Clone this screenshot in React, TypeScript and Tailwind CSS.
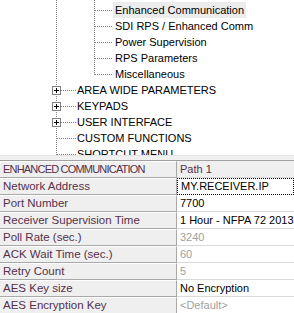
const DOT = "#808080";

type Child = { label: string; selected?: boolean; last?: boolean };
type Top = { label: string; expandable?: boolean };

const children: Child[] = [
  { label: "Enhanced Communication", selected: true },
  { label: "SDI RPS / Enhanced Comm" },
  { label: "Power Supervision" },
  { label: "RPS Parameters" },
  { label: "Miscellaneous", last: true },
];

const tops: Top[] = [
  { label: "AREA WIDE PARAMETERS", expandable: true },
  { label: "KEYPADS", expandable: true },
  { label: "USER INTERFACE", expandable: true },
  { label: "CUSTOM FUNCTIONS" },
  { label: "SHORTCUT MENU" },
];

type Row = { label: string; value: string; tone?: "dim" | "focus" | "head" };

const rows: Row[] = [
  { label: "ENHANCED COMMUNICATION", value: "Path 1", tone: "head" },
  { label: "Network Address", value: "MY.RECEIVER.IP", tone: "focus" },
  { label: "Port Number", value: "7700" },
  { label: "Receiver Supervision Time", value: "1 Hour - NFPA 72 2013" },
  { label: "Poll Rate (sec.)", value: "3240", tone: "dim" },
  { label: "ACK Wait Time (sec.)", value: "60", tone: "dim" },
  { label: "Retry Count", value: "5", tone: "dim" },
  { label: "AES Key size", value: "No Encryption" },
  { label: "AES Encryption Key", value: "<Default>", tone: "dim" },
];

function VLine({ x, y1 = 0, y2 = 16 }: { x: number; y1?: number; y2?: number }) {
  return <line x1={x} y1={y1} x2={x} y2={y2} stroke={DOT} strokeDasharray="1 1" />;
}

function ChildRow({ item }: { item: Child }) {
  return (
    <div className="flex h-4 items-center">
      <svg width="113" height="16" className="shrink-0">
        <VLine x={56.5} />
        <VLine x={94.5} y2={item.last ? 9 : 16} />
        <line x1="95" y1="8.5" x2="112" y2="8.5" stroke={DOT} strokeDasharray="1 1" />
      </svg>
      <span className={`h-4 px-[2px] leading-4 text-black ${item.selected ? "bg-[#ececec]" : ""}`}>
        {item.label}
      </span>
    </div>
  );
}

function TopRow({ item }: { item: Top }) {
  return (
    <div className="flex h-4 items-center">
      <svg width="77" height="16" className="shrink-0">
        <VLine x={56.5} />
        <line x1={item.expandable ? 61 : 57} y1="8.5" x2="76" y2="8.5" stroke={DOT} strokeDasharray="1 1" />
        {item.expandable && (
          <g>
            <rect x="52.5" y="4.5" width="8" height="8" fill="#fff" stroke="#808080" />
            <line x1="54" y1="8.5" x2="59" y2="8.5" stroke="#000" />
            <line x1="56.5" y1="6" x2="56.5" y2="11" stroke="#000" />
          </g>
        )}
      </svg>
      <span className="leading-4 text-black">{item.label}</span>
    </div>
  );
}

function GridRow({ row }: { row: Row }) {
  const valueTone =
    row.tone === "dim"
      ? "text-[#a0a0a0] bg-white"
      : row.tone === "head"
        ? "text-[#55304a] bg-[#efefef]"
        : row.tone === "focus"
          ? "text-black bg-white border border-dotted border-black pl-[2px]"
          : "text-black bg-white";
  return (
    <div className="flex h-[17px]">
      <div
        className={`flex w-[177px] shrink-0 items-center border-t border-b border-r border-t-white border-b-[#a8a8a8] border-r-[#a8a8a8] bg-[#efefef] pl-[3px] text-[#55304a] ${
          row.tone === "head" ? "text-[11px] tracking-[-0.8px]" : "text-[11.5px]"
        }`}
      >
        {row.label}
      </div>
      <div
        className={`flex min-w-0 flex-1 items-center overflow-hidden whitespace-nowrap border-b border-[#dadada] pl-[3px] ${valueTone}`}
      >
        {row.value}
      </div>
    </div>
  );
}

export default function App() {
  return (
    <div className="h-[313px] w-[294px] overflow-hidden bg-white font-['Liberation_Sans',Arial,sans-serif] text-[11px]">
      <div className="h-[155px] overflow-hidden bg-white">
        <svg width="113" height="2" className="block">
          <VLine x={56.5} y2={2} />
          <VLine x={94.5} y2={2} />
        </svg>
        {children.map((c) => (
          <ChildRow key={c.label} item={c} />
        ))}
        {tops.map((t) => (
          <TopRow key={t.label} item={t} />
        ))}
      </div>
      <div className="h-[5px] border-t border-[#e4e4e4] bg-[#f0f0f0]" />
      <div className="border-t border-[#a0a0a0] text-[11px]">
        {rows.map((r) => (
          <GridRow key={r.label} row={r} />
        ))}
      </div>
    </div>
  );
}
